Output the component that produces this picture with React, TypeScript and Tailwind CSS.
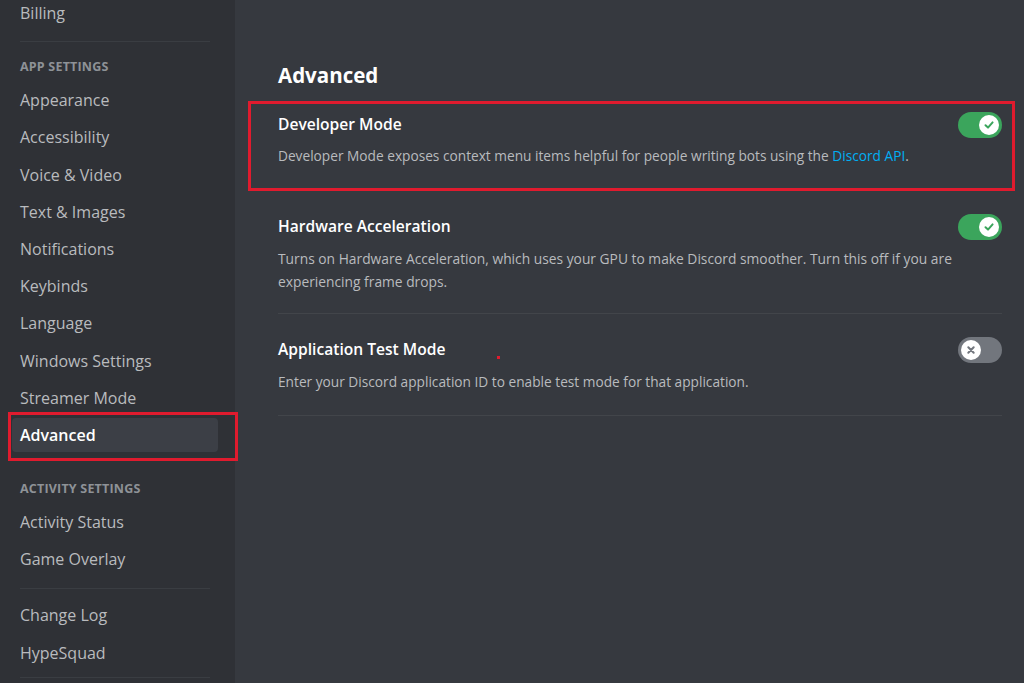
import React from "react";

const font = { fontFamily: '"Open Sans", "Noto Sans", sans-serif' };

function Toggle({ on }: { on: boolean }) {
  if (on) {
    return (
      <div className="w-[44px] h-[26px] rounded-full bg-[#3ba55c] flex items-center justify-end pr-[3px] shrink-0">
        <div className="w-[20px] h-[20px] rounded-full bg-white flex items-center justify-center">
          <svg width="12" height="12" viewBox="0 0 12 12" fill="none">
            <path d="M2.5 6.3 L5 8.6 L9.6 3.4" stroke="#3ba55c" strokeWidth="2" strokeLinecap="round" strokeLinejoin="round" />
          </svg>
        </div>
      </div>
    );
  }
  return (
    <div className="w-[44px] h-[26px] rounded-full bg-[#72767d] flex items-center justify-start pl-[3px] shrink-0">
      <div className="w-[20px] h-[20px] rounded-full bg-white flex items-center justify-center">
        <svg width="12" height="12" viewBox="0 0 12 12" fill="none">
          <path d="M3.3 3.3 L8.7 8.7 M8.7 3.3 L3.3 8.7" stroke="#72767d" strokeWidth="2" strokeLinecap="round" />
        </svg>
      </div>
    </div>
  );
}

function NavItem({ label, selected }: { label: string; selected?: boolean }) {
  return (
    <div
      className={`h-[34px] mb-[3.2px] w-[206px] px-[8px] flex items-center rounded-[4px] text-[16px] ${
        selected ? "bg-[#3c3f46] text-white font-semibold" : "text-[#b9bbbe]"
      }`}
    >
      {label}
    </div>
  );
}

function Header({ label }: { label: string }) {
  return (
    <div className="h-[26px] px-[8px] flex items-center text-[12.5px] font-bold text-[#8e9297] tracking-[0.2px] mb-[3px]">
      {label}
    </div>
  );
}

function Sep() {
  return <div className="mx-[8px] w-[190px] h-px bg-[#3a3d42]" />;
}

export default function App() {
  return (
    <div className="w-[1024px] h-[683px] flex overflow-hidden bg-[#36393f]" style={font}>
      <div className="w-[235px] shrink-0 bg-[#2f3136] pl-[12px] relative">
        <div className="mt-[-4px]">
          <NavItem label="Billing" />
          <div className="h-[8px]" />
          <Sep />
          <div className="h-[12px]" />
          <Header label="APP SETTINGS" />
          <NavItem label="Appearance" />
          <NavItem label="Accessibility" />
          <NavItem label="Voice & Video" />
          <NavItem label="Text & Images" />
          <NavItem label="Notifications" />
          <NavItem label="Keybinds" />
          <NavItem label="Language" />
          <NavItem label="Windows Settings" />
          <NavItem label="Streamer Mode" />
          <div className="relative">
            <NavItem label="Advanced" selected />
            <div className="absolute left-[-4px] top-[-6px] w-[230px] h-[49px] border-[3px] border-[#e01b2e] pointer-events-none" />
          </div>
          <div className="h-[21px]" />
          <Header label="ACTIVITY SETTINGS" />
          <NavItem label="Activity Status" />
          <NavItem label="Game Overlay" />
          <div className="h-[9px]" />
          <Sep />
          <div className="h-[9px]" />
          <NavItem label="Change Log" />
          <NavItem label="HypeSquad" />
          <div className="h-[4px]" />
          <Sep />
        </div>
      </div>

      <div className="flex-1 pl-[43px] pr-[22px] pt-[61px]">
        <div className="text-[20.5px] font-bold text-white leading-[28px]">Advanced</div>

        <div className="relative mt-[23px]">
          <div className="absolute left-[-30px] right-[-13px] top-[-11px] h-[90px] border-[3px] border-[#e01b2e] pointer-events-none" />
          <div className="flex items-center justify-between h-[26px]">
            <div className="text-[15.6px] font-semibold text-white">Developer Mode</div>
            <Toggle on />
          </div>
          <div className="mt-[8px] text-[13.7px] leading-[20px] text-[#b9bbbe]">
            Developer Mode exposes context menu items helpful for people writing bots using the{" "}
            <span className="text-[#00aff4]">Discord API</span>.
          </div>
        </div>

        <div className="mt-[48px]">
          <div className="flex items-center justify-between h-[26px]">
            <div className="text-[15.6px] font-semibold text-white">Hardware Acceleration</div>
            <Toggle on />
          </div>
          <div className="mt-[7px] text-[13.8px] leading-[23px] text-[#b9bbbe] pr-[40px]">
            Turns on Hardware Acceleration, which uses your GPU to make Discord smoother. Turn this off if you are experiencing frame drops.
          </div>
          <div className="mt-[20px] h-px bg-[#42454a]" />
        </div>

        <div className="mt-[23px] relative">
          <div className="flex items-center justify-between h-[26px]">
            <div className="text-[15.6px] font-semibold text-white">Application Test Mode</div>
            <Toggle on={false} />
          </div>
          <div className="absolute left-[219px] top-[19px] w-[3px] h-[3px] bg-[#e01b2e]" />
          <div className="mt-[9px] text-[13.7px] leading-[20px] text-[#b9bbbe]">
            Enter your Discord application ID to enable test mode for that application.
          </div>
          <div className="mt-[23px] h-px bg-[#42454a]" />
        </div>
      </div>
    </div>
  );
}
